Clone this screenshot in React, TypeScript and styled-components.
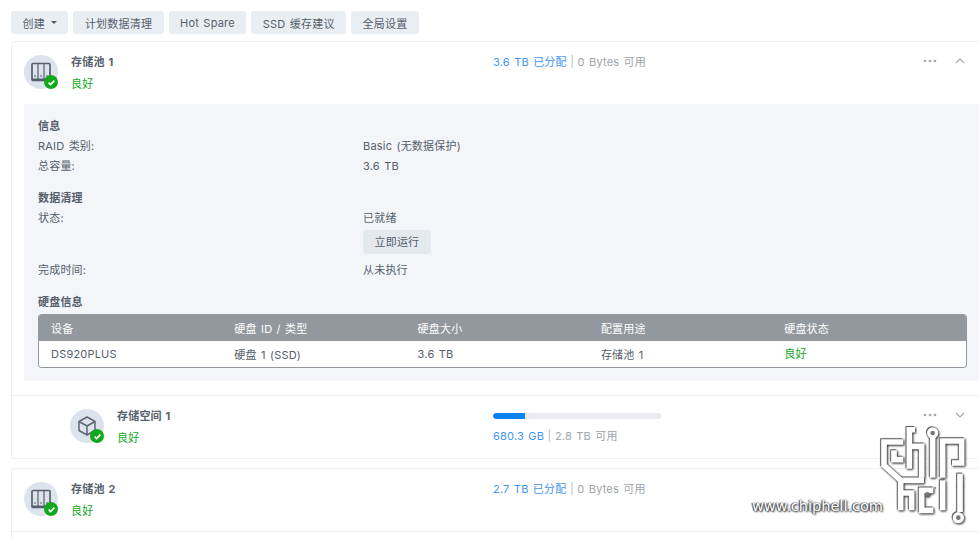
import React from 'react';
import styled, { createGlobalStyle } from 'styled-components';

const GlobalStyle = createGlobalStyle`
  html, body {
    margin: 0;
    padding: 0;
    background: #fff;
    overflow: hidden;
  }
  body {
    font-family: Inter, "Noto Sans CJK SC", sans-serif;
    font-size: 11px;
    letter-spacing: 0.2px;
    word-spacing: 1px;
    color: #56606b;
  }
`;

const Page = styled.div`
  position: relative;
  width: 979px;
  height: 540px;
  overflow: hidden;
  padding: 11px 0 0 11px;
  box-sizing: border-box;
`;

const Toolbar = styled.div`
  display: flex;
  gap: 5px;
  margin-bottom: 7px;
`;

const ToolButton = styled.button`
  height: 23px;
  padding: 0 11.5px;
  border: 0;
  border-radius: 3px;
  background: #e9eef3;
  color: #56606b;
  font: inherit;
  letter-spacing: inherit;
  word-spacing: inherit;
  display: flex;
  align-items: center;
  gap: 6px;
`;

const Caret = styled.span`
  width: 0;
  height: 0;
  border-left: 3px solid transparent;
  border-right: 3px solid transparent;
  border-top: 3px solid #56606b;
`;

const Card = styled.section`
  width: 990px;
  border: 1px solid #eef0f3;
  border-radius: 3px;
  margin-bottom: 9px;
`;

const Row = styled.div<{ $indent?: boolean; $top?: boolean }>`
  display: grid;
  grid-template-columns: ${({ $indent }) => ($indent ? '423px 430px auto' : '469px 430px auto')};
  height: 62px;
  padding-left: ${({ $indent }) => ($indent ? '58px' : '12px')};
  border-top: ${({ $top }) => ($top ? '1px solid #eef0f3' : '0')};
  box-sizing: content-box;
`;

const Identity = styled.div`
  display: flex;
  gap: 13px;
  padding-top: 13px;
`;

const IconCircle = styled.div`
  position: relative;
  width: 34px;
  height: 34px;
  border-radius: 50%;
  background: #dce3ec;
  display: flex;
  align-items: center;
  justify-content: center;
`;

const Badge = styled.span`
  position: absolute;
  right: 0;
  bottom: 0;
  width: 14px;
  height: 14px;
  border-radius: 50%;
  background: #12a81c;
  display: flex;
  align-items: center;
  justify-content: center;
`;

const Names = styled.div`
  display: flex;
  flex-direction: column;
  gap: 8px;
`;

const Name = styled.div`
  font-weight: 700;
  line-height: 14px;
`;

const Good = styled.span`
  color: #12a81c;
  line-height: 14px;
`;

const Usage = styled.div`
  padding-top: 13px;
  line-height: 15px;
  color: #9ea4ab;
`;

const Used = styled.span`
  color: #3f95f0;
`;

const Sep = styled.span`
  margin: 0 3.5px;
  color: #b5bac0;
`;

const BarTrack = styled.div`
  width: 168px;
  height: 6px;
  border-radius: 3px;
  background: #e9ebee;
  margin: 4px 0 10px;
  overflow: hidden;
`;

const BarFill = styled.div`
  height: 100%;
  background: #0a82f0;
  border-radius: 3px 0 0 3px;
`;

const Actions = styled.div`
  display: flex;
  gap: 17px;
  padding-top: 12px;
  align-items: flex-start;
`;

const Panel = styled.div`
  margin: 0 0 14px 12px;
  padding: 15px 0 13px 14px;
  background: #f3f5f9;
  border-radius: 3px;
`;

const Heading = styled.div<{ $first?: boolean; $tight?: boolean }>`
  font-weight: 700;
  line-height: 14px;
  margin-top: ${({ $first }) => ($first ? '0' : '18px')};
  margin-bottom: ${({ $tight }) => ($tight ? '5px' : '6px')};
`;

const Info = styled.div`
  display: grid;
  grid-template-columns: 325px 1fr;
  line-height: 14px;
  margin-bottom: 6px;
`;

const RunButton = styled(ToolButton)`
  height: 24px;
  margin: 5px 0 3px;
  background: #e4e9ee;
`;

const Table = styled.div`
  width: 929px;
  border: 1px solid #93989e;
  border-top: 0;
  border-radius: 4px;
  overflow: hidden;
  box-sizing: border-box;
  background: #fff;
`;

const TableRow = styled.div<{ $head?: boolean }>`
  display: grid;
  grid-template-columns: repeat(5, 183.3px);
  height: ${({ $head }) => ($head ? '27px' : '26px')};
  align-items: center;
  padding-left: 12px;
  background: ${({ $head }) => ($head ? '#93989e' : '#fff')};
  color: ${({ $head }) => ($head ? '#fff' : 'inherit')};
`;

const Watermark = styled.div`
  position: absolute;
  left: 751px;
  top: 424px;
  width: 226px;
  height: 108px;
`;

const SiteText = styled.span`
  position: absolute;
  left: 1px;
  bottom: 18px;
  font-family: "DejaVu Sans", sans-serif;
  font-size: 14.5px;
  letter-spacing: 0;
  word-spacing: 0;
  color: #fff;
  text-shadow: 0 0 2px #333, 1px 1px 2px #333, -1px 0 1px #555;
`;

const LogoSvg = styled.svg`
  position: absolute;
  left: 129px;
  top: 3px;
  filter: drop-shadow(1px 1px 1px #333) drop-shadow(-0.5px -0.5px 0.5px #666);
`;

const Dots = () => (
  <svg width="14" height="14" viewBox="0 0 14 14">
    <circle cx="2" cy="7" r="1.3" fill="#a3a8ae" />
    <circle cx="7" cy="7" r="1.3" fill="#a3a8ae" />
    <circle cx="12" cy="7" r="1.3" fill="#a3a8ae" />
  </svg>
);

const Chevron = ({ up }: { up?: boolean }) => (
  <svg width="12" height="14" viewBox="0 0 12 14">
    <path d={up ? 'M2 9l4-4 4 4' : 'M2 5l4 4 4-4'} fill="none" stroke="#a3a8ae" strokeWidth="1.2" />
  </svg>
);

const PoolIcon = () => (
  <svg width="20" height="20" viewBox="0 0 20 20">
    <rect x="1" y="1.5" width="18" height="17" rx="1" fill="none" stroke="#56606c" strokeWidth="1.7" />
    <path d="M7 2v15M13 2v15" stroke="#56606c" strokeWidth="1.2" />
    <path d="M3 14h2M9 14h2M15 14h2" stroke="#56606c" strokeWidth="1.2" />
    <rect x="1" y="16.5" width="18" height="2" fill="#56606c" />
  </svg>
);

const VolumeIcon = () => (
  <svg width="20" height="20" viewBox="0 0 20 20">
    <path
      d="M10 1l8 4.5v9L10 19l-8-4.5v-9zM2 5.5L10 10l8-4.5M10 10v9"
      fill="none"
      stroke="#5d6772"
      strokeWidth="1.5"
      strokeLinejoin="round"
    />
  </svg>
);

const Status = () => (
  <Badge>
    <svg width="9" height="9" viewBox="0 0 9 9">
      <path d="M1.6 4.6l2 2 3.8-4" fill="none" stroke="#fff" strokeWidth="1.6" />
    </svg>
  </Badge>
);

type EntryProps = {
  name: string;
  icon: React.ReactNode;
  indent?: boolean;
  top?: boolean;
  usage: React.ReactNode;
  open?: boolean;
};

const Entry = ({ name, icon, indent, top, usage, open }: EntryProps) => (
  <Row $indent={indent} $top={top}>
    <Identity>
      <IconCircle>
        {icon}
        <Status />
      </IconCircle>
      <Names>
        <Name>{name}</Name>
        <Good>良好</Good>
      </Names>
    </Identity>
    {usage}
    <Actions>
      <Dots />
      <Chevron up={open} />
    </Actions>
  </Row>
);

const columns = ['设备', '硬盘 ID / 类型', '硬盘大小', '配置用途', '硬盘状态'];

export default function App() {
  return (
    <Page>
      <GlobalStyle />
      <Toolbar>
        <ToolButton>
          创建 <Caret />
        </ToolButton>
        <ToolButton>计划数据清理</ToolButton>
        <ToolButton>Hot Spare</ToolButton>
        <ToolButton>SSD 缓存建议</ToolButton>
        <ToolButton>全局设置</ToolButton>
      </Toolbar>

      <Card>
        <Entry
          name="存储池 1"
          icon={<PoolIcon />}
          open
          usage={
            <Usage>
              <Used>3.6 TB 已分配</Used>
              <Sep>|</Sep>0 Bytes 可用
            </Usage>
          }
        />
        <Panel>
          <Heading $first>信息</Heading>
          <Info>
            <span>RAID 类别:</span>
            <span>Basic (无数据保护)</span>
          </Info>
          <Info>
            <span>总容量:</span>
            <span>3.6 TB</span>
          </Info>
          <Heading>数据清理</Heading>
          <Info>
            <span>状态:</span>
            <div>
              已就绪
              <RunButton>立即运行</RunButton>
            </div>
          </Info>
          <Info>
            <span>完成时间:</span>
            <span>从未执行</span>
          </Info>
          <Heading $tight>硬盘信息</Heading>
          <Table>
            <TableRow $head>
              {columns.map((c) => (
                <span key={c}>{c}</span>
              ))}
            </TableRow>
            <TableRow>
              <span>DS920PLUS</span>
              <span>硬盘 1 (SSD)</span>
              <span>3.6 TB</span>
              <span>存储池 1</span>
              <Good>良好</Good>
            </TableRow>
          </Table>
        </Panel>
        <Entry
          name="存储空间 1"
          icon={<VolumeIcon />}
          indent
          top
          usage={
            <Usage>
              <BarTrack>
                <BarFill style={{ width: '19%' }} />
              </BarTrack>
              <Used>680.3 GB</Used>
              <Sep>|</Sep>2.8 TB 可用
            </Usage>
          }
        />
      </Card>

      <Card>
        <Entry
          name="存储池 2"
          icon={<PoolIcon />}
          usage={
            <Usage>
              <Used>2.7 TB 已分配</Used>
              <Sep>|</Sep>0 Bytes 可用
            </Usage>
          }
        />
        <Row $top />
      </Card>

      <Watermark>
        <SiteText>www.chiphell.com</SiteText>
        <LogoSvg width="90" height="100" viewBox="420 80 270 300">
          <g fill="none" stroke="#fff" strokeWidth="17" strokeLinejoin="miter">
            <path d="M490 125H432V195L482 240V330" />
            <path d="M490 178H462V150" />
            <path d="M525 88H508V205M508 138H545V232" />
            <path d="M578 110V232" />
            <path d="M608 232V122H665V188H636" />
            <path d="M482 240H552M482 278H515V330" />
            <path d="M580 330H545V270H580" />
            <path d="M608 240V330" />
            <path d="M660 220V335" />
          </g>
          <circle cx="578" cy="98" r="17" fill="#fff" />
          <circle cx="578" cy="98" r="7" fill="#777" />
          <circle cx="562" cy="282" r="7" fill="#777" />
          <circle cx="655" cy="352" r="17" fill="#fff" />
          <circle cx="655" cy="352" r="7" fill="#777" />
        </LogoSvg>
      </Watermark>
    </Page>
  );
}
